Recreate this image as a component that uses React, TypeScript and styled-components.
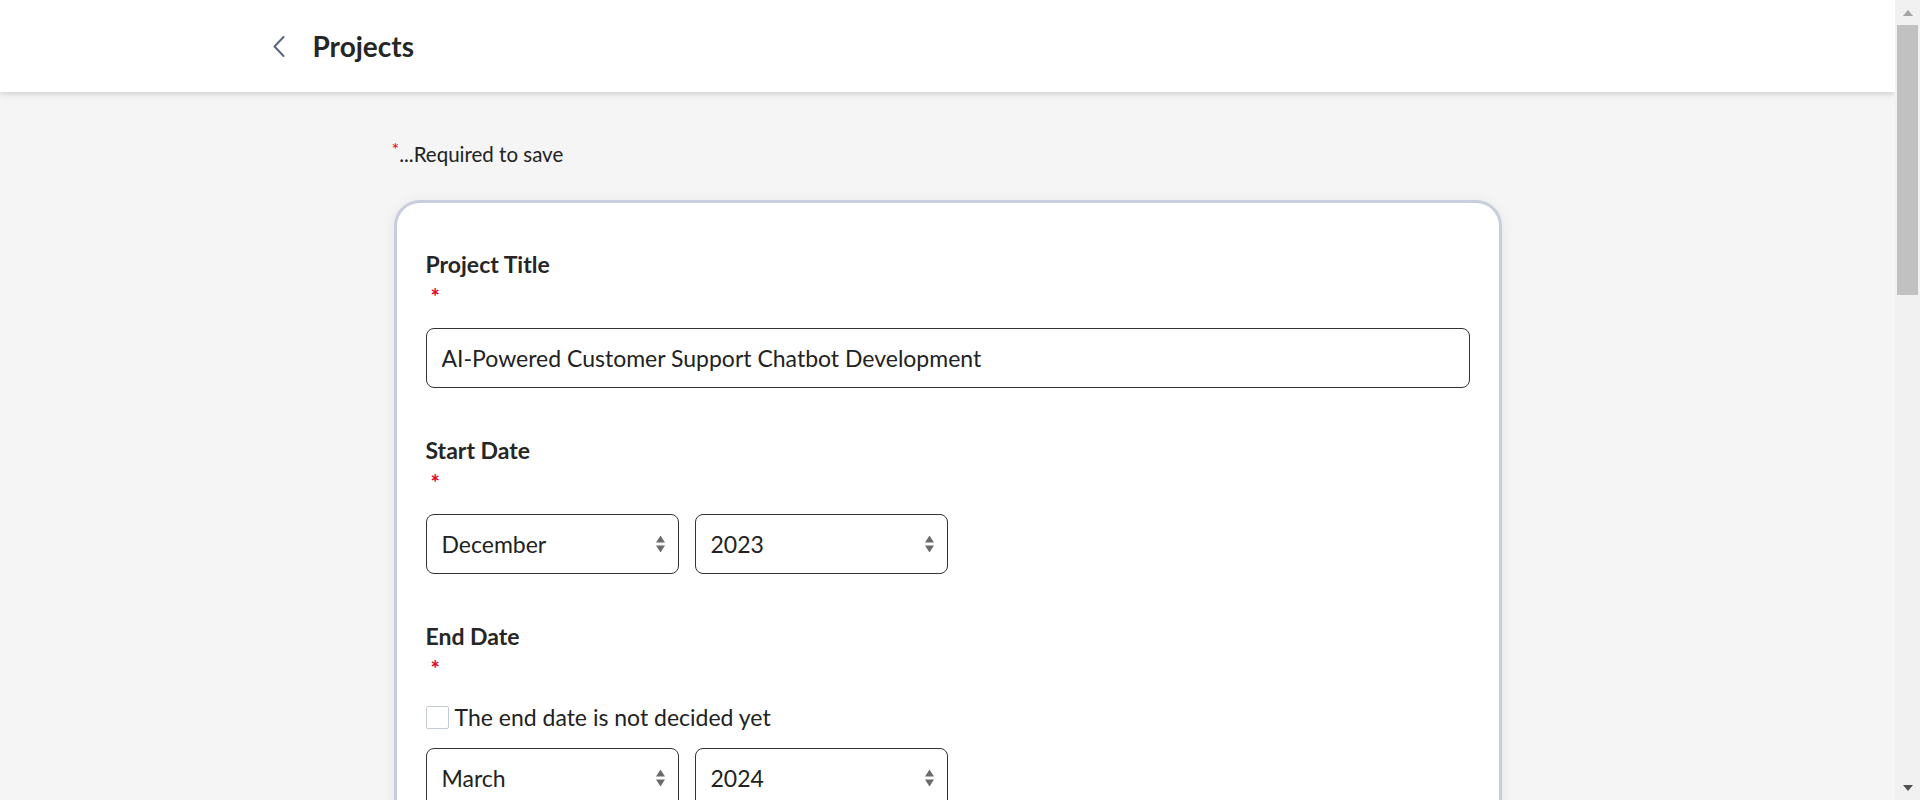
import React from "react";
import styled, { createGlobalStyle } from "styled-components";

const GlobalStyle = createGlobalStyle`
  html, body { margin: 0; padding: 0; }
  body {
    margin-right: 25px;
    background: #f5f5f5;
    font-family: Lato, "Noto Sans", "Liberation Sans", sans-serif;
    color: #222;
  }
  * { box-sizing: border-box; }
`;

/* Classic (non-overlay) scrollbar as seen in the reference */
const ScrollRail = styled.div`
  position: fixed;
  top: 0;
  right: 0;
  bottom: 0;
  width: 25px;
  background: #f1f1f1;
  display: flex;
  flex-direction: column;
  z-index: 10;
`;

const ScrollButton = styled.div`
  height: 25px;
  flex: none;
  display: flex;
  align-items: center;
  justify-content: center;
`;

const ScrollTrack = styled.div`
  flex: 1;
  padding: 0 2px;
`;

const ScrollThumb = styled.div`
  height: 270px;
  background: #c1c1c1;
`;

const Header = styled.header`
  height: 92px;
  background: #fff;
  box-shadow: 0 2px 6px rgba(0, 0, 0, 0.16);
  position: relative;
  z-index: 1;
`;

const HeaderInner = styled.div`
  max-width: 1352px;
  height: 100%;
  margin: 0 auto;
  display: flex;
  align-items: center;
  gap: 27px;
`;

const BackButton = styled.button`
  border: none;
  background: none;
  padding: 0;
  width: 14px;
  height: 22px;
  display: flex;
  align-items: center;
  justify-content: center;
  cursor: pointer;
`;

const PageTitle = styled.h1`
  margin: 0;
  font-size: 28px;
  font-weight: 700;
  color: #262626;
`;

const Main = styled.main`
  max-width: 1108px;
  margin: 0 auto;
  padding: 50px 0 120px;
`;

const RequiredNote = styled.p`
  margin: 0 0 34px -2px;
  font-size: 20.5px;
  line-height: 24px;
  color: #222;
`;

const Star = styled.span`
  color: #e4002b;
  font-size: 18px;
  line-height: 10px;
  vertical-align: 6px;
`;

const Card = styled.section`
  background: #fff;
  border: 3px solid #c8cedd;
  border-radius: 26px;
  box-shadow: 0 2px 14px rgba(0, 0, 0, 0.07);
  padding: 48px 29px 48px;
  display: flex;
  flex-direction: column;
  gap: 49px;
`;

const Field = styled.div`
  display: flex;
  flex-direction: column;
`;

const Label = styled.label`
  display: block;
  font-size: 23px;
  line-height: 26px;
  font-weight: 700;
  color: #262626;
`;

const RequiredMark = styled.span`
  display: block;
  color: #e4002b;
  font-size: 22px;
  font-weight: 700;
  line-height: 15px;
  height: 15px;
  margin: 12px 0 0 5px;
`;

const Control = styled.div<{ $gap?: number }>`
  margin-top: ${(p) => p.$gap ?? 24}px;
`;

const TextInput = styled.input`
  width: 100%;
  height: 60px;
  border: 1px solid #333;
  border-radius: 8px;
  padding: 0 15px;
  font-family: inherit;
  font-size: 23px;
  color: #222;
  background: #fff;
  outline: none;
`;

const TextArea = styled.textarea`
  width: 100%;
  height: 220px;
  border: 1px solid #333;
  border-radius: 8px;
  padding: 15px;
  font-family: inherit;
  font-size: 23px;
  color: #222;
  resize: none;
`;

const SelectRow = styled.div`
  display: flex;
  gap: 16px;
`;

const SelectWrap = styled.div`
  position: relative;
  width: 253px;
`;

const Select = styled.select`
  width: 100%;
  height: 60px;
  appearance: none;
  -webkit-appearance: none;
  border: 1px solid #333;
  border-radius: 8px;
  padding: 0 36px 0 15px;
  font-family: inherit;
  font-size: 23px;
  color: #222;
  background: #fff;
  outline: none;
`;

const SelectArrows = styled.svg`
  position: absolute;
  right: 14px;
  top: 50%;
  transform: translateY(-50%);
  pointer-events: none;
`;

const CheckRow = styled.label`
  display: flex;
  align-items: center;
  gap: 6px;
  font-size: 23px;
  line-height: 26px;
  color: #222;
  margin-top: 28px;
`;

const CheckBox = styled.span`
  width: 23px;
  height: 23px;
  flex: none;
  border: 1px solid #c5cad8;
  border-radius: 2px;
  background: #fff;
`;

const ButtonRow = styled.div`
  display: flex;
  justify-content: flex-end;
  gap: 16px;
`;

const Button = styled.button<{ $primary?: boolean }>`
  height: 56px;
  padding: 0 40px;
  border-radius: 28px;
  font-family: inherit;
  font-size: 22px;
  font-weight: 700;
  border: 2px solid #2f3d60;
  background: ${(p) => (p.$primary ? "#2f3d60" : "#fff")};
  color: ${(p) => (p.$primary ? "#fff" : "#2f3d60")};
`;

const Arrows = () => (
  <SelectArrows width="9" height="17" viewBox="0 0 9 17">
    <path d="M4.5 0 L9 7 L0 7 Z" fill="#6b6b6b" />
    <path d="M0 10 L9 10 L4.5 17 Z" fill="#6b6b6b" />
  </SelectArrows>
);

const months = [
  "January", "February", "March", "April", "May", "June",
  "July", "August", "September", "October", "November", "December",
];
const years = Array.from({ length: 30 }, (_, i) => String(2030 - i));

const DateSelect = ({ month, year }: { month: string; year: string }) => (
  <SelectRow>
    <SelectWrap>
      <Select defaultValue={month}>
        {months.map((m) => (
          <option key={m}>{m}</option>
        ))}
      </Select>
      <Arrows />
    </SelectWrap>
    <SelectWrap>
      <Select defaultValue={year}>
        {years.map((y) => (
          <option key={y}>{y}</option>
        ))}
      </Select>
      <Arrows />
    </SelectWrap>
  </SelectRow>
);

export default function App() {
  return (
    <>
      <GlobalStyle />
      <Header>
        <HeaderInner>
          <BackButton aria-label="Back">
            <svg width="12" height="21" viewBox="0 0 12 21" fill="none">
              <path d="M10.5 1 L1.5 10.5 L10.5 20" stroke="#5c677f" strokeWidth="2" strokeLinecap="round" strokeLinejoin="round" />
            </svg>
          </BackButton>
          <PageTitle>Projects</PageTitle>
        </HeaderInner>
      </Header>
      <Main>
        <RequiredNote>
          <Star>*</Star>...Required to save
        </RequiredNote>
        <Card>
          <Field>
            <Label>Project Title</Label>
            <RequiredMark>*</RequiredMark>
            <Control>
              <TextInput defaultValue="AI-Powered Customer Support Chatbot Development" />
            </Control>
          </Field>
          <Field>
            <Label>Start Date</Label>
            <RequiredMark>*</RequiredMark>
            <Control>
              <DateSelect month="December" year="2023" />
            </Control>
          </Field>
          <Field>
            <Label>End Date</Label>
            <RequiredMark>*</RequiredMark>
            <CheckRow>
              <CheckBox />
              The end date is not decided yet
            </CheckRow>
            <Control $gap={18}>
              <DateSelect month="March" year="2024" />
            </Control>
          </Field>
          <Field>
            <Label>Role</Label>
            <Control>
              <TextInput defaultValue="Project Lead" />
            </Control>
          </Field>
          <Field>
            <Label>Project Description</Label>
            <Control>
              <TextArea defaultValue="Designed and delivered a conversational assistant that answers customer questions around the clock." />
            </Control>
          </Field>
          <Field>
            <Label>Project URL</Label>
            <Control>
              <TextInput defaultValue="" />
            </Control>
          </Field>
          <Field>
            <Label>Skills Used</Label>
            <Control>
              <TextInput defaultValue="Python, NLP, Dialogflow" />
            </Control>
          </Field>
          <ButtonRow>
            <Button>Cancel</Button>
            <Button $primary>Save</Button>
          </ButtonRow>
        </Card>
      </Main>
      <ScrollRail aria-hidden="true">
        <ScrollButton>
          <svg width="10" height="6" viewBox="0 0 10 6">
            <path d="M5 0 L10 6 L0 6 Z" fill="#a3a3a3" />
          </svg>
        </ScrollButton>
        <ScrollTrack>
          <ScrollThumb />
        </ScrollTrack>
        <ScrollButton>
          <svg width="10" height="6" viewBox="0 0 10 6">
            <path d="M0 0 L10 0 L5 6 Z" fill="#505050" />
          </svg>
        </ScrollButton>
      </ScrollRail>
    </>
  );
}
